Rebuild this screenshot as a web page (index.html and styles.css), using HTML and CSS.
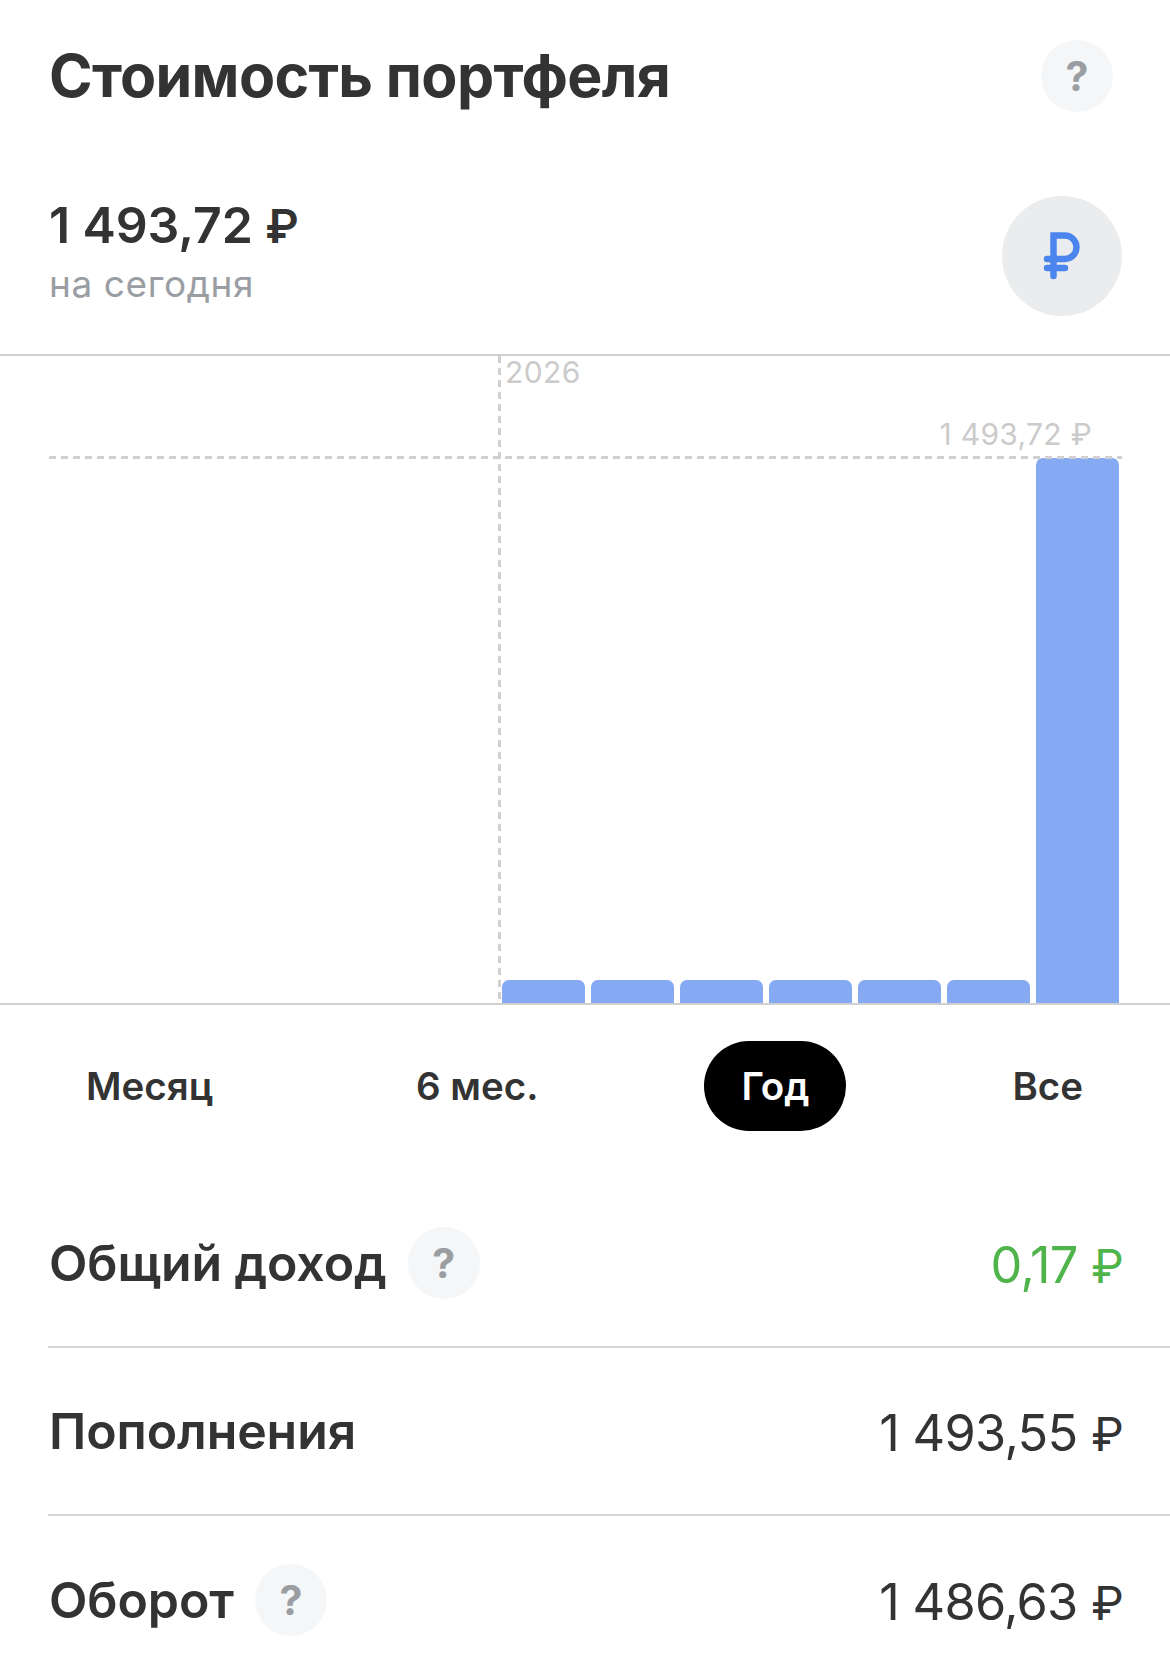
FILE: index.html
```html
<!DOCTYPE html>
<html lang="ru">
<head>
    <meta charset="UTF-8">
    <meta name="viewport" content="width=device-width, initial-scale=1.0">
    <title>Стоимость портфеля</title>
    <link rel="stylesheet" href="styles.css">
</head>
<body>
    <div class="page">
        <header class="header">
            <h1>Стоимость портфеля</h1>
            <span class="help help-top">?</span>
        </header>

        <section class="summary">
            <div>
                <div class="summary-value">1 493,72 <span class="rub">₽</span></div>
                <div class="summary-note">на сегодня</div>
            </div>
            <div class="currency">
                <svg width="40" height="52" viewBox="0 0 40 52" fill="none" stroke="#4d85ee" stroke-width="6.5" stroke-linecap="round">
                    <path d="M11.5 46V5.5H22.75A11.75 11.75 0 0 1 22.75 29H5"/>
                    <path d="M5 38H23"/>
                </svg>
            </div>
        </section>

        <section class="chart">
            <div class="grid-year"></div>
            <div class="grid-max"></div>
            <span class="chart-year">2026</span>
            <span class="chart-max">1 493,72 ₽</span>
            <div class="bars">
                <div class="bar" style="height: 23px"></div>
                <div class="bar" style="height: 23px"></div>
                <div class="bar" style="height: 23px"></div>
                <div class="bar" style="height: 23px"></div>
                <div class="bar" style="height: 23px"></div>
                <div class="bar" style="height: 23px"></div>
                <div class="bar" style="height: 545px"></div>
            </div>
        </section>

        <nav class="tabs">
            <span class="tab">Месяц</span>
            <span class="tab">6 мес.</span>
            <span class="tab active">Год</span>
            <span class="tab">Все</span>
        </nav>

        <section class="rows">
            <div class="row">
                <div class="row-label">Общий доход <span class="help">?</span></div>
                <div class="row-value green">0,17 <span class="rub">₽</span></div>
            </div>
            <div class="row">
                <div class="row-label">Пополнения</div>
                <div class="row-value">1 493,55 <span class="rub">₽</span></div>
            </div>
            <div class="row">
                <div class="row-label">Оборот <span class="help">?</span></div>
                <div class="row-value">1 486,63 <span class="rub">₽</span></div>
            </div>
        </section>
    </div>
</body>
</html>
```

FILE: styles.css
```css
body {
    margin: 0;
    background-color: #ffffff;
    font-family: Inter, "Noto Sans", sans-serif;
    color: #333333;
}

.page {
    width: 1170px;
    height: 1670px;
    overflow: hidden;
}

.header {
    height: 152px;
    padding: 0 57px 0 49px;
    box-sizing: border-box;
    display: flex;
    justify-content: space-between;
    align-items: center;
}

h1 {
    margin: 0 0 1px;
    font-size: 59px;
    font-weight: 700;
    letter-spacing: -0.65px;
}

.help {
    width: 72px;
    height: 72px;
    border-radius: 50%;
    background-color: #f5f6f8;
    color: #9a9ea3;
    font-size: 41px;
    font-weight: 700;
    display: inline-flex;
    justify-content: center;
    align-items: center;
}

.rub {
    font-size: 0.92em;
}

.summary {
    height: 204px;
    padding: 0 48px 0 49px;
    box-sizing: border-box;
    border-bottom: 2px solid #d0d0d0;
    display: flex;
    justify-content: space-between;
    align-items: flex-start;
}

.summary-value {
    margin-top: 41px;
    font-size: 50px;
    font-weight: 600;
    line-height: 64px;
    letter-spacing: -0.1px;
}

.summary-note {
    margin-top: 4px;
    font-size: 37px;
    line-height: 44px;
    color: #9a9ea3;
    letter-spacing: 0.6px;
}

.currency {
    width: 120px;
    height: 120px;
    margin-top: 44px;
    border-radius: 50%;
    background-color: #eaecee;
    display: flex;
    justify-content: center;
    align-items: center;
}

.chart {
    position: relative;
    height: 649px;
    box-sizing: border-box;
    border-bottom: 2px solid #d0d0d0;
}

.bars {
    height: 100%;
    padding-left: 502px;
    box-sizing: border-box;
    display: flex;
    align-items: flex-end;
    gap: 6px;
}

.bar {
    width: 83px;
    background-color: #85a9f2;
    border-radius: 7px 7px 0 0;
}

.grid-year {
    position: absolute;
    left: 498px;
    top: 0;
    bottom: 0;
    width: 3px;
    background-image: repeating-linear-gradient(to bottom, #d0d0d0 0 7px, transparent 7px 12px);
}

.grid-max {
    position: absolute;
    left: 49px;
    top: 100px;
    width: 1073px;
    height: 3px;
    z-index: 1;
    background-image: repeating-linear-gradient(to right, #d0d0d0 0 7px, transparent 7px 12px);
}

.chart-year,
.chart-max {
    position: absolute;
    font-size: 30px;
    line-height: 36px;
    color: #cbcbcb;
    letter-spacing: 0.4px;
}

.chart-year {
    left: 505px;
    top: -2px;
}

.chart-max {
    right: 78px;
    top: 60px;
    letter-spacing: 0.3px;
}

.tabs {
    height: 175px;
    padding: 36px 50px 0 49px;
    box-sizing: border-box;
    display: flex;
    justify-content: space-between;
    align-items: flex-start;
}

.tab {
    height: 90px;
    padding: 0 37px 1px;
    box-sizing: border-box;
    border-radius: 46px;
    font-size: 38.5px;
    font-weight: 600;
    display: flex;
    align-items: center;
}

.tab.active {
    background-color: #000000;
    color: #ffffff;
}

.rows {
    padding-left: 48px;
}

.row {
    height: 168px;
    padding-right: 47px;
    box-sizing: border-box;
    border-bottom: 2px solid #d8d8d8;
    display: flex;
    justify-content: space-between;
    align-items: center;
}

.row:last-child {
    border-bottom: none;
}

.row-label {
    margin-left: 1px;
    font-size: 50px;
    font-weight: 600;
    letter-spacing: -0.1px;
    display: flex;
    align-items: center;
    gap: 21px;
}

.row-value {
    padding-top: 2px;
    font-size: 50.5px;
    font-weight: 400;
    letter-spacing: -0.7px;
}

.green {
    color: #4fb54b;
}
```
